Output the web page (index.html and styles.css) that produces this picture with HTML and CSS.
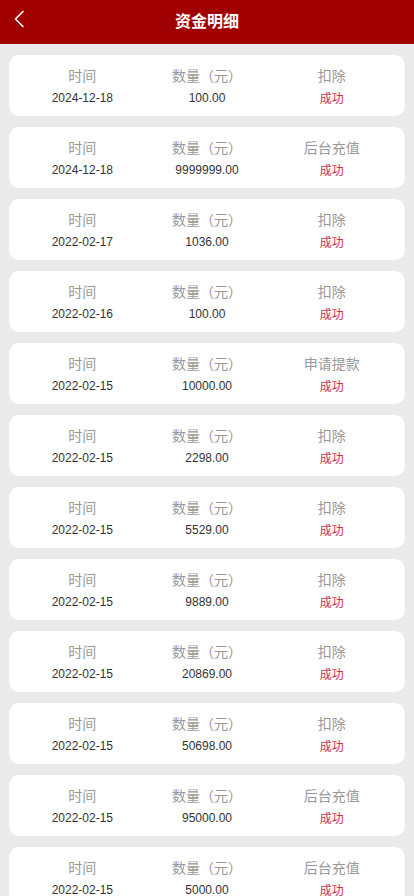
FILE: index.html
```html
<!DOCTYPE html>
<html lang="zh-CN">
<head>
    <meta charset="UTF-8">
    <meta name="viewport" content="width=device-width, initial-scale=1.0">
    <title>资金明细</title>
    <link rel="stylesheet" href="styles.css">
</head>
<body>
    <header class="top-bar">
        <a class="back-btn" href="#">
            <svg width="12" height="18" viewBox="0 0 12 18">
                <path d="M10 1.5 L2.5 9 L10 16.5" fill="none" stroke="#fff" stroke-width="1.6" stroke-linecap="round" stroke-linejoin="round"/>
            </svg>
        </a>
        <h1>资金明细</h1>
    </header>

    <div class="record-list">
        <div class="record">
            <div class="col"><div class="label">时间</div><div class="value">2024-12-18</div></div>
            <div class="col"><div class="label">数量（元）</div><div class="value">100.00</div></div>
            <div class="col"><div class="label">扣除</div><div class="status">成功</div></div>
        </div>
        <div class="record">
            <div class="col"><div class="label">时间</div><div class="value">2024-12-18</div></div>
            <div class="col"><div class="label">数量（元）</div><div class="value">9999999.00</div></div>
            <div class="col"><div class="label">后台充值</div><div class="status">成功</div></div>
        </div>
        <div class="record">
            <div class="col"><div class="label">时间</div><div class="value">2022-02-17</div></div>
            <div class="col"><div class="label">数量（元）</div><div class="value">1036.00</div></div>
            <div class="col"><div class="label">扣除</div><div class="status">成功</div></div>
        </div>
        <div class="record">
            <div class="col"><div class="label">时间</div><div class="value">2022-02-16</div></div>
            <div class="col"><div class="label">数量（元）</div><div class="value">100.00</div></div>
            <div class="col"><div class="label">扣除</div><div class="status">成功</div></div>
        </div>
        <div class="record">
            <div class="col"><div class="label">时间</div><div class="value">2022-02-15</div></div>
            <div class="col"><div class="label">数量（元）</div><div class="value">10000.00</div></div>
            <div class="col"><div class="label">申请提款</div><div class="status">成功</div></div>
        </div>
        <div class="record">
            <div class="col"><div class="label">时间</div><div class="value">2022-02-15</div></div>
            <div class="col"><div class="label">数量（元）</div><div class="value">2298.00</div></div>
            <div class="col"><div class="label">扣除</div><div class="status">成功</div></div>
        </div>
        <div class="record">
            <div class="col"><div class="label">时间</div><div class="value">2022-02-15</div></div>
            <div class="col"><div class="label">数量（元）</div><div class="value">5529.00</div></div>
            <div class="col"><div class="label">扣除</div><div class="status">成功</div></div>
        </div>
        <div class="record">
            <div class="col"><div class="label">时间</div><div class="value">2022-02-15</div></div>
            <div class="col"><div class="label">数量（元）</div><div class="value">9889.00</div></div>
            <div class="col"><div class="label">扣除</div><div class="status">成功</div></div>
        </div>
        <div class="record">
            <div class="col"><div class="label">时间</div><div class="value">2022-02-15</div></div>
            <div class="col"><div class="label">数量（元）</div><div class="value">20869.00</div></div>
            <div class="col"><div class="label">扣除</div><div class="status">成功</div></div>
        </div>
        <div class="record">
            <div class="col"><div class="label">时间</div><div class="value">2022-02-15</div></div>
            <div class="col"><div class="label">数量（元）</div><div class="value">50698.00</div></div>
            <div class="col"><div class="label">扣除</div><div class="status">成功</div></div>
        </div>
        <div class="record">
            <div class="col"><div class="label">时间</div><div class="value">2022-02-15</div></div>
            <div class="col"><div class="label">数量（元）</div><div class="value">95000.00</div></div>
            <div class="col"><div class="label">后台充值</div><div class="status">成功</div></div>
        </div>
        <div class="record">
            <div class="col"><div class="label">时间</div><div class="value">2022-02-15</div></div>
            <div class="col"><div class="label">数量（元）</div><div class="value">5000.00</div></div>
            <div class="col"><div class="label">后台充值</div><div class="status">成功</div></div>
        </div>
    </div>
</body>
</html>
```

FILE: styles.css
```css
:root {
    --header-color: #a00000;
    --bg-color: #ebe9ec;
    --card-color: #ffffff;
    --label-color: #999999;
    --value-color: #333333;
    --status-color: #d42a4e;
}

* {
    box-sizing: border-box;
    margin: 0;
    padding: 0;
}

body {
    font-family: "Liberation Sans", "Noto Sans CJK SC", Arial, sans-serif;
    background-color: var(--bg-color);
    color: var(--value-color);
}

.top-bar {
    position: relative;
    height: 44px;
    background-color: var(--header-color);
    display: flex;
    align-items: center;
    justify-content: center;
}

.top-bar h1 {
    color: #fff;
    font-size: 16px;
    font-weight: bold;
    line-height: 44px;
}

.back-btn {
    position: absolute;
    left: 13px;
    top: 10px;
    display: block;
    width: 12px;
    height: 18px;
}

.record-list {
    padding: 11px 9px;
    display: flex;
    flex-direction: column;
    gap: 11px;
}

.record {
    background-color: var(--card-color);
    border-radius: 10px;
    height: 61px;
    padding: 10px 11px 0;
    display: flex;
}

.col {
    flex: 1;
    text-align: center;
}

.label {
    font-size: 14px;
    line-height: 22px;
    color: var(--label-color);
}

.value {
    font-size: 12px;
    line-height: 22px;
    color: var(--value-color);
}

.status {
    font-size: 12px;
    line-height: 23px;
    padding-top: 1px;
    color: var(--status-color);
}
```
